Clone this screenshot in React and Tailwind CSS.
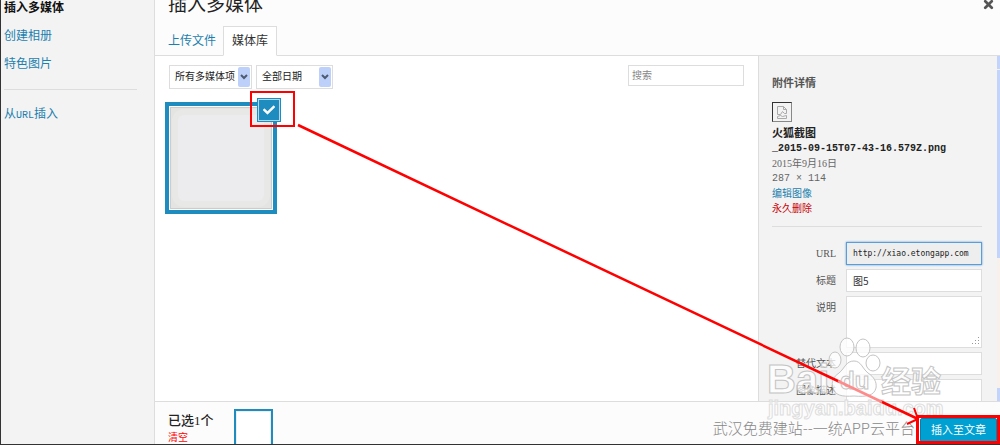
import { useState } from "react";
import clsx from "clsx";
import { FaCheck } from "react-icons/fa";
import { X } from "lucide-react";

const menuItems = ['创建相册', '特色图片'];
const tabs = ['上传文件', '媒体库'];

function App() {
    const [tab, setTab] = useState('媒体库');

    return (
        <div className="relative flex h-screen overflow-hidden border-l border-b border-[#333] bg-white font-['Liberation_Serif','Noto_Sans_CJK_SC',sans-serif] text-xs text-[#444]">
            <SideMenu />
            <div className="flex min-w-0 flex-1 flex-col">
                <header className="flex h-14 shrink-0 flex-col justify-between border-b border-[#ddd] bg-[#fcfcfc] pl-3">
                    <div className="flex items-start justify-between pr-[5px] pl-px">
                        <h1 className="text-[19px] leading-[9px] text-[#222]">插入多媒体</h1>
                        <button type="button" aria-label="关闭" className="-mt-0.5 text-[#555]">
                            <X size={13} strokeWidth={5} />
                        </button>
                    </div>
                    <div className="-mb-px flex">
                        {tabs.map(e => (
                            <button
                                type="button"
                                key={e}
                                onClick={() => setTab(e)}
                                className={clsx('h-[30px] border text-xs', e === tab ? 'border-[#ddd] border-b-white bg-white px-2 text-[#333]' : 'border-transparent pr-[6px] text-[#1c7fae]')}
                            >
                                {e}
                            </button>
                        ))}
                    </div>
                </header>
                <div className="flex min-h-0 flex-1">
                    <Gallery />
                    <Details />
                </div>
                <Footer />
            </div>
            <Watermark />
            <Annotation />
        </div>
    );
}

function SideMenu() {
    return (
        <nav className="flex w-[154px] shrink-0 flex-col gap-[14px] border-r border-[#ddd] bg-[#f3f3f3] pt-px pr-[17px] pl-[3px] leading-[14px]">
            <h2 className="text-xs leading-[14px] font-bold text-[#111]">插入多媒体</h2>
            {menuItems.map(e => <a href="#" key={e} className="text-[#1c7fae]">{e}</a>)}
            <hr className="mt-1 mb-[3px] border-[#ddd]" />
            <a href="#" className="text-[#1c7fae]">从<span className="font-['Liberation_Mono',monospace] text-[10px]">URL</span>插入</a>
        </nav>
    );
}

function FilterSelect({ label, options, className }) {
    return (
        <div className={clsx('relative h-6 border border-[#ddd] bg-white', className)}>
            <select aria-label={label} className="block h-full w-full appearance-none pl-[5px] text-[10px] text-[#222] outline-none">
                {options.map(e => <option key={e}>{e}</option>)}
            </select>
            <span className="pointer-events-none absolute inset-y-px right-px flex w-3 items-center justify-center rounded-xs bg-[#bdd0fa]">
                <svg viewBox="0 0 8 6" className="w-2" fill="none" stroke="#4d5a70" strokeWidth="2">
                    <path d="M1 1l3 3 3-3" />
                </svg>
            </span>
        </div>
    );
}

function Gallery() {
    return (
        <main className="min-w-0 flex-1 pt-[9px] pr-[14px] pl-[10px]">
            <div className="flex items-start justify-between pl-1">
                <div className="flex gap-1">
                    <FilterSelect label="类型" options={['所有多媒体项']} className="w-[83px]" />
                    <FilterSelect label="日期" options={['全部日期']} className="w-[77px]" />
                </div>
                <input type="search" aria-label="搜索" placeholder="搜索" className="h-[21px] w-[116px] border border-[#ddd] px-[3px] text-[10px] outline-none placeholder:text-[#888]" />
            </div>
            <div className="relative mt-[13px] size-28 border-4 border-[#1e8cbe] bg-white p-px">
                <div className="h-full border border-[#ccc] bg-[#e4e4e3] p-px">
                    <div className="h-full rounded-xl border-[6px] border-[#e8e8e6] bg-[#ececee]"></div>
                </div>
                <button type="button" aria-label="取消选择" className="absolute -top-2 -right-2 flex size-6 items-center justify-center border border-[#1e8cbe] bg-[#1e8cbe] text-white inset-ring inset-ring-[#b4d9ea]">
                    <FaCheck size={12} />
                </button>
            </div>
        </main>
    );
}

function Field({ id, label, children }) {
    return (
        <div className="flex items-start gap-[10px]">
            <label htmlFor={id} className="flex-1 text-right text-[10px] leading-[23px] text-[#555]">{label}</label>
            {children}
        </div>
    );
}

function Details() {
    const inputClasses = "h-[23px] w-[136px] border border-[#ddd] bg-white px-[6px] font-['Noto_Sans_CJK_SC',sans-serif] text-[10px] text-[#333] outline-none";

    return (
        <aside className="flex w-[242px] shrink-0 overflow-hidden border-l border-[#ddd] bg-[#f3f3f3]">
            <div className="min-w-0 flex-1 pt-5 pr-[15px] pl-[13px]">
                <h2 className="text-[11px] leading-[14px] font-bold text-[#555]">附件详情</h2>
                <div className="mt-3 flex size-5 items-center justify-center border border-[#888] border-t-[#333] border-l-[#333]">
                    <svg viewBox="0 0 12 13" className="w-3" fill="none" stroke="#aaa">
                        <path d="M1.500 0.500h6l3 3v4h-2l-2-2-2 3h-3zM7.500 0.500v3h3M1.500 12.500v-2l3-1 2 1 4-1v3z" />
                    </svg>
                </div>
                <div className="mt-1 text-[10px] leading-[15px] text-[#666]">
                    <p className="text-[11px] font-bold text-[#222]">火狐截图</p>
                    <p className="font-['Liberation_Mono',monospace] font-bold whitespace-nowrap text-[#222]">_2015-09-15T07-43-16.579Z.png</p>
                    <p>2015年9月16日</p>
                    <p className="font-['Liberation_Mono',monospace]">287 × 114</p>
                    <p><a href="#" className="text-[#1c7fae]">编辑图像</a></p>
                    <p><a href="#" className="text-[#c8000a]">永久删除</a></p>
                </div>
                <hr className="mt-[10px] mb-[15px] border-[#ddd]" />
                <form className="flex flex-col gap-1">
                    <Field id="url" label="URL">
                        <input id="url" readOnly defaultValue="http://xiao.etongapp.com" className="h-[23px] w-[136px] border border-[#5b9dd9] bg-[#eee] px-[6px] font-['DejaVu_Sans_Mono',monospace] text-[8px] text-[#222] shadow-[0_0_2px_#5b9dd9] outline-none" />
                    </Field>
                    <Field id="title" label="标题">
                        <input id="title" defaultValue="图5" className={inputClasses} />
                    </Field>
                    <Field id="caption" label="说明">
                        <div className="relative w-[136px]">
                            <textarea id="caption" className="block h-[52px] w-full resize-none border border-[#ddd] bg-white text-[10px] outline-none" />
                            <svg viewBox="0 0 9 9" className="pointer-events-none absolute right-0.5 bottom-0.5 w-[9px]" fill="#999">
                                <path d="M7 0h1v1h-1zM4 3h1v1h-1zM7 3h1v1h-1zM1 6h1v1h-1zM4 6h1v1h-1zM7 6h1v1h-1z" />
                            </svg>
                        </div>
                    </Field>
                    <Field id="alt" label="替代文本">
                        <input id="alt" className={inputClasses} />
                    </Field>
                    <Field id="description" label="图像描述">
                        <textarea id="description" className="h-[52px] w-[136px] resize-none border border-[#ddd] bg-white text-[10px] outline-none" />
                    </Field>
                </form>
            </div>
            <div className="flex w-[3px] flex-col gap-px bg-[#f8f0ea]">
                <span className="h-[13px] bg-[#c2d4fb]"></span>
                <span className="h-[188px] bg-[#c2d4fb]"></span>
                <span className="mt-auto h-[13px] bg-[#c2d4fb]"></span>
            </div>
        </aside>
    );
}

function Footer() {
    return (
        <footer className="flex h-[43px] shrink-0 items-start overflow-hidden border-t border-[#ddd] bg-[#fcfcfc] pr-[3px] pl-[13px]">
            <div className="pt-[11px]">
                <p className="text-[13px] leading-4 font-medium text-[#222]">已选1个</p>
                <button type="button" className="block text-[10px] leading-[17px] text-[#f00]">清空</button>
            </div>
            <div className="mt-[7px] ml-5 h-[38px] w-[39px] shrink-0 border-2 border-[#1e8cbe] bg-white inset-ring inset-ring-[#eee]"></div>
            <p className="mt-[15px] ml-auto font-['Noto_Sans_CJK_SC',sans-serif] text-[15px] leading-[22px] font-light whitespace-nowrap text-[#888]">武汉免费建站--一统APP云平台</p>
            <button type="button" className="mt-4 ml-[5px] h-6 w-[77px] shrink-0 rounded-xs border border-[#0082b0] bg-[#00a0d2] text-[11px] leading-4 text-white">插入至文章</button>
        </footer>
    );
}

function Watermark() {
    return (
        <svg viewBox="0 0 190 95" className="pointer-events-none absolute right-[50px] bottom-[22px] w-[190px]" fill="#fff" fillOpacity="0.75" stroke="#c4c4c4">
            <ellipse cx="75" cy="33" rx="6" ry="8" />
            <ellipse cx="87" cy="20" rx="7" ry="9" />
            <ellipse cx="103" cy="21" rx="7" ry="9" />
            <ellipse cx="113" cy="36" rx="7" ry="8" />
            <path d="M94 34c-8 0-9 7-15 12-6 4-8 9-6 15 2 7 8 9 21 8 12 1 20 0 22-8 1-6-2-11-8-15-6-5-7-12-14-12z" />
            <g fontWeight="bold" fontFamily="Liberation Sans, Noto Sans CJK SC, sans-serif">
                <text x="7" y="66" fontSize="40">Bai</text>
                <text x="80" y="62" fontSize="24">du</text>
                <text x="121" y="65" fontSize="30">经验</text>
                <text x="8" y="88" fontSize="20" stroke="#ddd">jingyan.baidu.com</text>
            </g>
        </svg>
    );
}

function Annotation() {
    return (
        <svg width="1000" height="445" className="pointer-events-none absolute top-0 -left-px max-w-none" fill="none" stroke="#f00" strokeWidth="2">
            <rect x="251" y="92" width="43" height="34" />
            <path d="M298 125L840 382M918 419L880 401" strokeWidth="2.500" />
            <path d="M838 381L882 402" stroke="#ff8a8a" strokeWidth="2.500" />
            <path d="M914 408L918 419L907 424" />
            <rect x="917.500" y="416.500" width="81" height="26" strokeWidth="3" />
        </svg>
    );
}

export default App;
